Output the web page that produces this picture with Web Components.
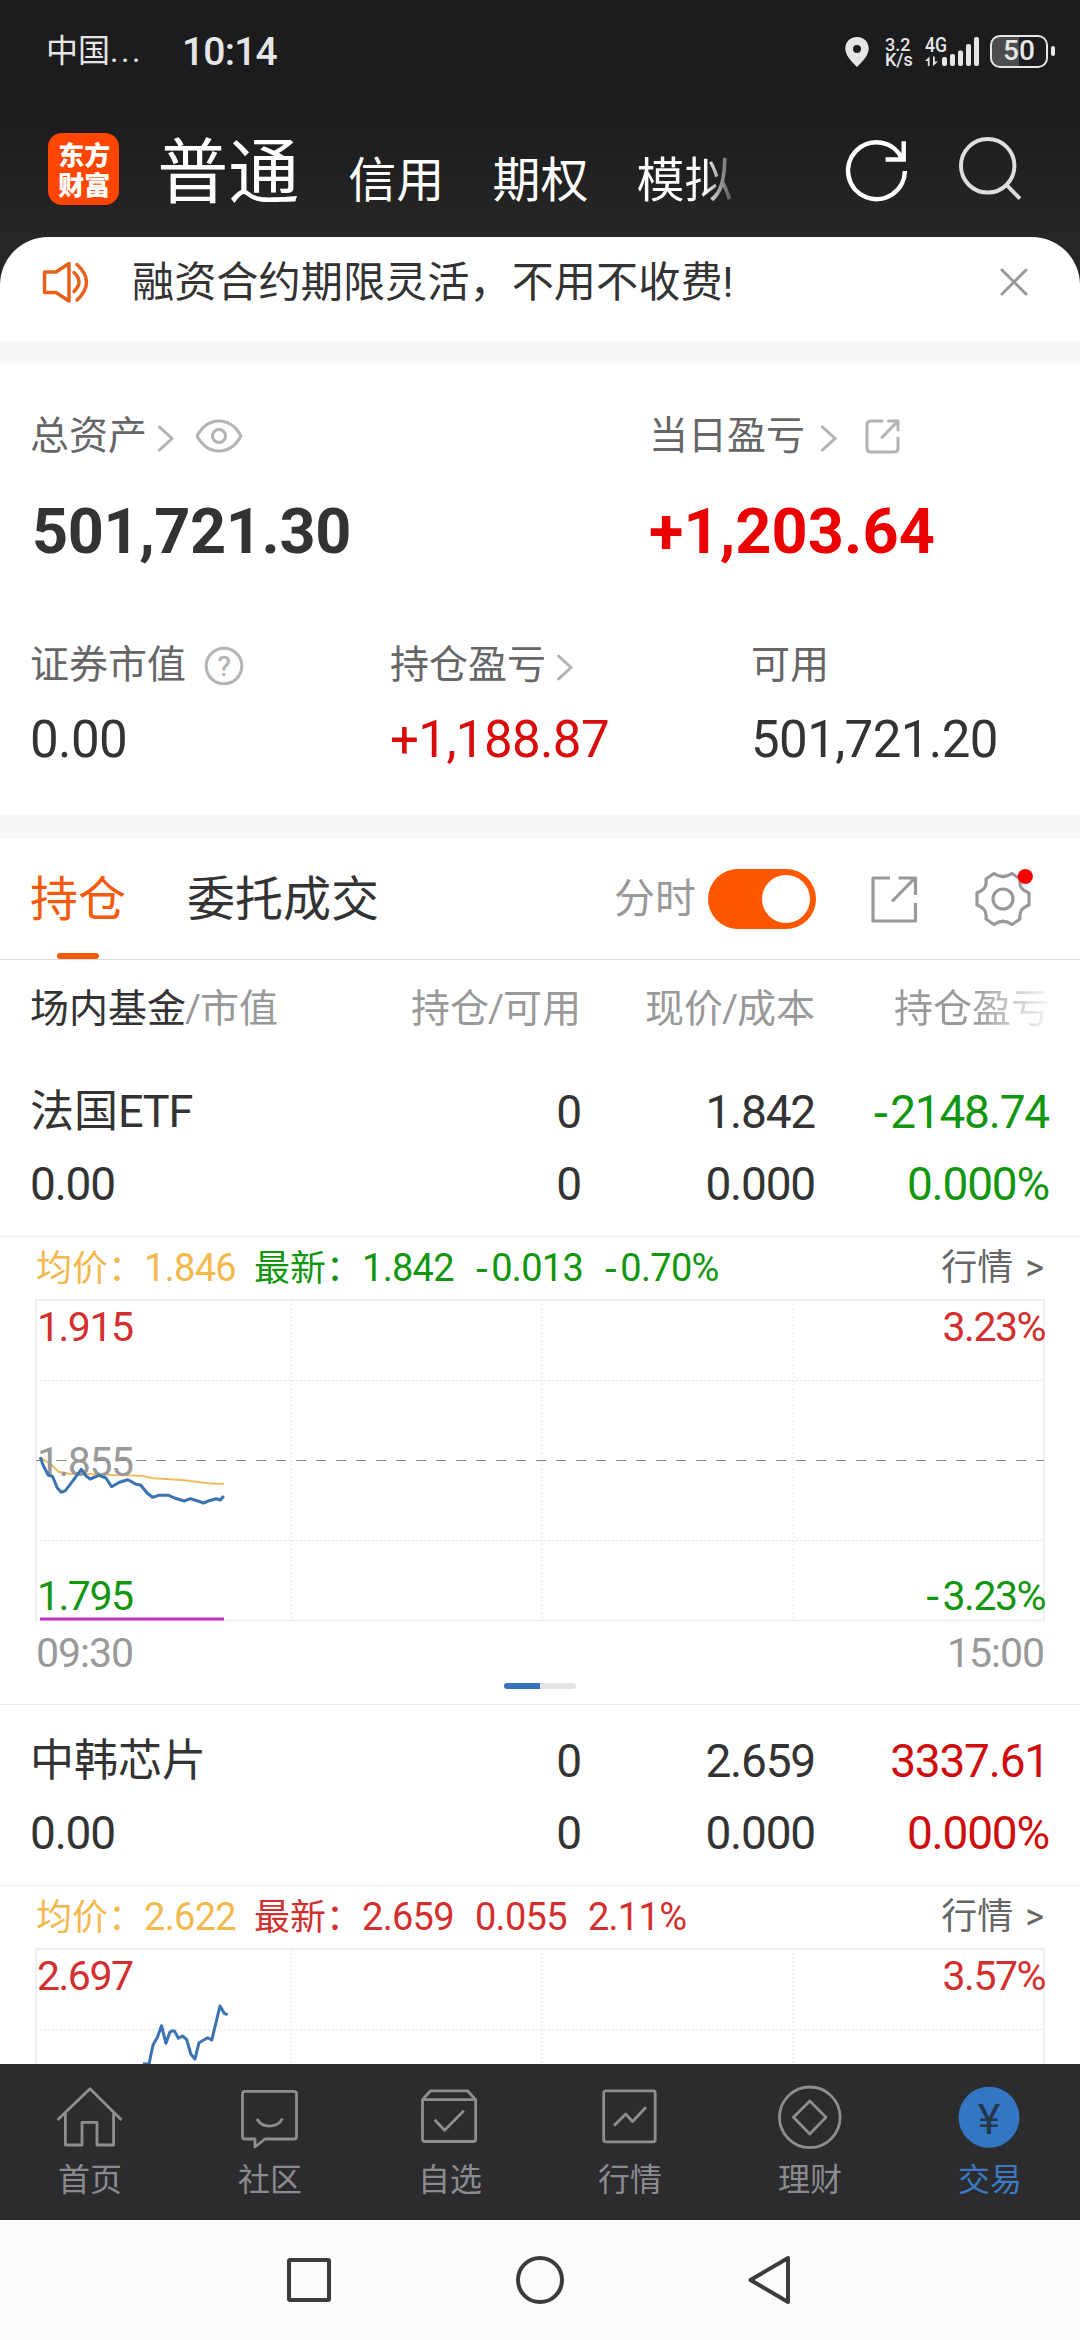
<!DOCTYPE html>
<html lang="zh-CN">
<head>
<meta charset="utf-8">
<title>交易</title>
<style>
    body {
        margin: 0;
        width: 1080px;
        height: 2340px;
        overflow: hidden;
        display: flex;
        flex-direction: column;
        background: #fff;
        color: #333;
        font-family: Roboto, "Noto Sans CJK SC", sans-serif;
    }
    .top {
        background: linear-gradient(#1c1c1e 110px, #262626 237px);
    }
    .list {
        flex: 1;
        min-height: 0;
        overflow: hidden;
    }
</style>
</head>
<body>
    <div class="top">
        <status-bar></status-bar>
        <trade-header></trade-header>
        <notice-bar>融资合约期限灵活，不用不收费!</notice-bar>
    </div>
    <asset-panel></asset-panel>
    <position-tabs></position-tabs>
    <div class="list">
        <position-head></position-head>
        <position-item name="法国ETF" price="1.842" profit="-2148.74" color="#12960f"></position-item>
        <minute-chart avg="1.846" last="1.842" change="-0.013" rate="-0.70%" color="#12960f"
            high="1.915" mid="1.855" low="1.795" percent="3.23%"
            avg-line="4.3,157.3 15.7,165 22.5,171.7 34.6,174 67.3,174.3 76,175 105,175.7 117,178.3 146.5,180 163.7,182.3 177.5,183.7 187.8,183.7"
            line="4.3,157.3 7,165 12.2,175 16.7,176.7 21.2,187.7 25.3,192.3 29.4,190.7 37,180.7 45.3,169.3 50,176 54.2,179 62.8,175.3 70,178 75.6,186.7 83.5,182.3 92,179.7 100,184.3 104.5,185 111.4,193.3 116.5,197.3 122.4,195.3 132.7,195.3 138.6,198 148.2,201 154.4,198.7 162,201 167.5,203 172.3,201 180,198.7 184.4,200 187.8,196"></minute-chart>
        <position-item name="中韩芯片" price="2.659" profit="3337.61" color="#d00d0d"></position-item>
        <minute-chart avg="2.622" last="2.659" change="0.055" rate="2.11%" color="#d32f2f"
            high="2.697" percent="3.57%"
            line="106.9,114.7 113,115 117,96 121.4,88.3 125.5,76.7 130,94.3 133.8,83.3 136.2,81.7 138.6,82.3 142.4,89.3 146.5,87 150.6,90.3 154.8,105 159,110 163,93.7 171.6,88.7 175.8,91 184,57 188.2,64.3 191.6,65.7"></minute-chart>
    </div>
    <tab-bar></tab-bar>
    <system-bar></system-bar>

<script>
class StatusBar extends HTMLElement {
    constructor() {
        super();
        this.attachShadow({ mode: 'open' });
        this.shadowRoot.innerHTML = `
        <style>
            :host {
                display: flex;
                align-items: center;
                box-sizing: border-box;
                height: 103px;
                padding: 0 32px 0 46px;
                color: #e6e6e6;
            }
            .carrier { font-size: 32px; width: 136px; line-height: 103px; white-space: nowrap; }
            .dots { letter-spacing: 2.5px; }
            .time { font-size: 39px; font-weight: 500; letter-spacing: -.8px; flex: 1; }
            .pin { margin-right: 16px; }
            .speed { font-size: 18px; line-height: 15px; font-weight: 500; width: 40px; }
            .net { font-size: 20px; font-weight: 500; }
            .battery {
                position: relative;
                box-sizing: border-box;
                width: 58px;
                height: 33px;
                margin-left: 10px;
                border: 2.5px solid #e6e6e6;
                border-radius: 10px;
                background: linear-gradient(90deg, #4c4c4e 27px, transparent 27px);
                font-size: 28px;
                font-weight: 500;
                line-height: 28px;
                text-align: center;
            }
            .battery::after {
                content: '';
                position: absolute;
                right: -9px;
                top: 9px;
                width: 4px;
                height: 10px;
                border-radius: 2px;
                background: #e6e6e6;
            }
            svg { display: block; overflow: visible; }
        </style>
        <div class="carrier">中国<span class="dots">...</span></div>
        <div class="time">10:14</div>
        <svg class="pin" width="24" height="30" viewBox="0 0 24 30"><path fill="#e6e6e6" fill-rule="evenodd" d="M12 0C5 0 .3 5 .3 11.5.3 18 6 24 12 30c6-6 11.700-12 11.700-18.500C23.700 5 19 0 12 0zM12 8a4 4 0 1 1 0 8 4 4 0 0 1 0-8z"/></svg>
        <div class="speed">3.2<br>K/s</div>
        <svg class="net" width="55" height="32" viewBox="0 0 55 32" fill="#e6e6e6">
            <text x="0" y="16" textLength="22" lengthAdjust="spacingAndGlyphs">4G</text>
            <path d="M0 25l4.500-4.500V30H2.800v-5zM8 20.500V30l5-4.500H9.800v-5z"/>
            <rect x="17" y="21" width="5" height="9" rx="2"/>
            <rect x="25" y="18" width="5" height="12" rx="2"/>
            <rect x="33" y="14.500" width="5" height="15.500" rx="2"/>
            <rect x="41" y="8" width="5" height="22" rx="2"/>
            <rect x="49" y="1" width="5" height="29" rx="2"/>
        </svg>
        <div class="battery">50</div>
        `;
    }
}
customElements.define('status-bar', StatusBar);


class TradeHeader extends HTMLElement {
    constructor() {
        super();
        this.attachShadow({ mode: 'open' });
        this.shadowRoot.innerHTML = `
        <style>
            :host {
                display: flex;
                box-sizing: border-box;
                height: 134px;
                padding: 30px 54px 0 48px;
                color: #fff;
            }
            .logo {
                box-sizing: border-box;
                width: 72px;
                height: 72px;
                padding: 6px 0 0 1px;
                border-radius: 14px;
                background: #ff4500;
                font: 900 26px/30px "Noto Sans CJK SC", sans-serif;
                text-align: center;
            }
            nav {
                display: flex;
                align-items: baseline;
                gap: 48px;
                width: 620px;
                height: 90px;
                margin-left: 38px;
                font-size: 48px;
                line-height: 80px;
                white-space: nowrap;
            }
            .on { font-size: 71px; margin-right: 1px; }
            .fade {
                background: linear-gradient(90deg, #fff 68px, #555 96px);
                -webkit-background-clip: text;
                background-clip: text;
                color: transparent;
            }
            .more { width: 36px; height: 6px; }
            svg { display: block; fill: none; }
            .refresh { margin: 1px 42px 0 64px; }
        </style>
        <div class="logo">东方<br>财富</div>
        <nav>
            <span class="on">普通</span>
            <span>信用</span>
            <span>期权</span>
            <span class="fade">模拟</span>
            <svg class="more" viewBox="0 0 36 6"><path fill="#3a3a3c" d="M0 6l4-5h4L4 6zM15 0h6v3h-4zM20 6l4-5h4l-4 5zM31 1h5v4h-4z"/></svg>
        </nav>
        <svg class="refresh" width="72" height="72" viewBox="0 0 72 72" stroke="#fff" stroke-width="4.500">
            <path d="M64.500 37A28.700 28.700 0 1 1 62 25"/>
            <path d="M63.300 7V25.300H45"/>
        </svg>
        <svg width="72" height="72" viewBox="0 0 72 72" stroke="#dedede" stroke-width="4">
            <circle cx="33" cy="32.800" r="27"/>
            <path d="M51.500 51.500L65.500 66"/>
        </svg>
        `;
    }
}
customElements.define('trade-header', TradeHeader);


class NoticeBar extends HTMLElement {
    constructor() {
        super();
        this.attachShadow({ mode: 'open' });
        this.shadowRoot.innerHTML = `
        <style>
            :host {
                display: flex;
                align-items: center;
                box-sizing: border-box;
                height: 104px;
                padding: 0 52px 14px 42px;
                border-radius: 48px 48px 0 0;
                background: #fff;
                font-size: 42.200px;
                line-height: 60px;
            }
            .text { flex: 1; margin-left: 42px; padding-top: 2px; }
            svg { fill: none; stroke-linecap: round; stroke-linejoin: round; }
        </style>
        <svg width="48" height="48" viewBox="0 0 48 48" stroke="#e8611c" stroke-width="3.500">
            <path d="M2.500 14H14L27 5.500V43L14 34.500H2.500z"/>
            <path d="M32 14.500Q42 24 32 33.500M35 6.500Q54 24 35 42"/>
        </svg>
        <div class="text"><slot></slot></div>
        <svg width="28" height="28" viewBox="0 0 28 28" stroke="#999" stroke-width="3"><path d="M2 2L26 26M26 2L2 26"/></svg>
        `;
    }
}
customElements.define('notice-bar', NoticeBar);


class AssetItem extends HTMLElement {
    constructor() {
        super();
        this.attachShadow({ mode: 'open' });
        this.shadowRoot.innerHTML = `
        <style>
            :host { display: block; white-space: nowrap; }
            .label {
                display: flex;
                align-items: center;
                height: 60px;
                font-size: 39px;
                line-height: 60px;
                color: #666;
            }
            .arrow { margin: 3px 0 0 var(--arrow-gap, 10px); }
            .value {
                margin-top: 12px;
                font-size: 51px;
                line-height: 66px;
                letter-spacing: -.6px;
            }
            :host([big]) .value {
                margin-top: 33px;
                font-size: 63px;
                font-weight: 700;
                letter-spacing: .1px;
            }
            :host([big]:not([up])) .value { padding-left: 2px; letter-spacing: -.4px; }
            :host([up]) .value { color: #d90b0b; }
            :host([big][up]) .value { color: #eb0000; }
        </style>
        <div class="label">
            <span id="label"></span>
            <svg class="arrow" width="18" height="28" viewBox="0 0 18 28" fill="none" stroke="#b3b3b3" stroke-width="3" stroke-linecap="round"><path d="M2.500 3L15 14.500 2.500 26"/></svg>
            <slot name="icon"></slot>
        </div>
        <div class="value"><slot></slot></div>
        `;
    }
    connectedCallback() {
        this.shadowRoot.querySelector('#label').innerText = this.getAttribute('label');
        if (!this.hasAttribute('arrow')) {
            this.shadowRoot.querySelector('.arrow').style.display = 'none';
        }
    }
}
customElements.define('asset-item', AssetItem);


class AssetPanel extends HTMLElement {
    constructor() {
        super();
        this.attachShadow({ mode: 'open' });
        this.shadowRoot.innerHTML = `
        <style>
            :host {
                display: block;
                box-sizing: border-box;
                height: 498px;
                padding: 41px 30px 0;
                border-top: 24px solid #f7f8fa;
                border-bottom: 24px solid #f7f8fa;
                background: #fff;
            }
            .row { display: grid; }
            .first { grid-template-columns: 619px 1fr; }
            .second { grid-template-columns: 360px 361px 1fr; margin-top: 70px; }
            .wide { --arrow-gap: 15px; }
            svg { display: block; fill: none; stroke: #b3b3b3; stroke-width: 3; stroke-linejoin: round; stroke-linecap: round; }
            .eye { margin-left: 20px; }
            .share { margin: 2px 0 0 27px; }
            .help { margin: 2px 0 0 17px; }
            .help text { fill: #b3b3b3; stroke: #b3b3b3; stroke-width: .5; font-size: 28px; text-anchor: middle; }
        </style>
        <div class="row first">
            <asset-item big arrow label="总资产">501,721.30
                <svg slot="icon" class="eye" width="48" height="34" viewBox="0 0 48 34"><path d="M2 17C13 -3 35 -3 46 17 35 37 13 37 2 17z"/><circle cx="24" cy="17" r="6.500"/></svg>
            </asset-item>
            <asset-item big up arrow class="wide" label="当日盈亏">+1,203.64
                <svg slot="icon" class="share" width="36" height="36" viewBox="0 0 36 36"><path d="M17 2H6Q2 2 2 6V29Q2 33 6 33H29Q33 33 33 29V19M23.500 2H33V11M32 3L17 18.500"/></svg>
            </asset-item>
        </div>
        <div class="row second">
            <asset-item label="证券市值">0.00
                <svg slot="icon" class="help" width="42" height="42" viewBox="0 0 42 42"><circle cx="21" cy="21" r="17.800"/><text x="21" y="31">?</text></svg>
            </asset-item>
            <asset-item up arrow style="--arrow-gap: 10px" label="持仓盈亏">+1,188.87</asset-item>
            <asset-item label="可用">501,721.20</asset-item>
        </div>
        `;
    }
}
customElements.define('asset-panel', AssetPanel);


class PositionTabs extends HTMLElement {
    constructor() {
        super();
        this.attachShadow({ mode: 'open' });
        this.shadowRoot.innerHTML = `
        <style>
            :host {
                display: flex;
                align-items: center;
                box-sizing: border-box;
                height: 121px;
                padding: 0 48px 0 30px;
                border-bottom: 1px solid #dcdcdc;
                font-size: 48px;
                line-height: 122px;
            }
            .tab { height: 120px; margin-right: 61px; }
            .on { position: relative; color: #f55a0c; }
            .on::after {
                content: '';
                position: absolute;
                left: 27px;
                bottom: 0;
                width: 42px;
                height: 6px;
                border-radius: 3px;
                background: #f55a0c;
            }
            .label { margin-left: auto; font-size: 41px; color: #999; }
            .switch {
                box-sizing: border-box;
                width: 108px;
                height: 60px;
                margin-left: 12px;
                padding: 6px;
                border-radius: 30px;
                background: #ff5700;
            }
            .switch::after {
                content: '';
                display: block;
                width: 48px;
                height: 48px;
                margin-left: auto;
                border-radius: 50%;
                background: #fff;
            }
            svg { display: block; fill: none; stroke: #999; stroke-width: 3.200; stroke-linejoin: round; overflow: visible; }
            .share { margin: 0 56px 0 54px; }
        </style>
        <span class="tab on">持仓</span>
        <span class="tab">委托成交</span>
        <span class="label">分时</span>
        <div class="switch"></div>
        <svg class="share" width="48" height="48" viewBox="0 0 48 48"><path d="M20 3H3V46H45.500V28M28.500 3H45.500V20M44 4L22 26.500"/></svg>
        <svg width="58" height="58" viewBox="-29 -29 58 58">
            <path d="M26 -6C19 -9 16 -12 17 -20L9 -25.500Q0 -19 -9 -25.500L-17 -20C-16 -12 -19 -9 -26 -6V6C-19 9 -16 12 -17 20L-9 25.500Q0 19 9 25.500L17 20C16 12 19 9 26 6z"/>
            <circle r="10"/>
            <circle cx="22.300" cy="-22.500" r="7.600" fill="#fb0000" stroke="none"/>
        </svg>
        `;
    }
}
customElements.define('position-tabs', PositionTabs);


class PositionHead extends HTMLElement {
    constructor() {
        super();
        this.attachShadow({ mode: 'open' });
        this.shadowRoot.innerHTML = `
        <style>
            :host {
                display: grid;
                grid-template-columns: 317px 234px 234px 235px;
                height: 96px;
                padding: 0 30px;
                font-size: 39px;
                line-height: 98px;
                color: #999;
                text-align: right;
                white-space: nowrap;
            }
            .first { text-align: left; }
            b { font-weight: 400; color: #333; }
            i { font-style: normal; margin: 0 -1px; }
            .fade {
                background: linear-gradient(90deg, #999 156px, #f4f4f4 232px);
                -webkit-background-clip: text;
                background-clip: text;
                color: transparent;
            }
        </style>
        <span class="first"><b>场内基金</b><i>/</i>市值</span>
        <span>持仓<i>/</i>可用</span>
        <span>现价<i>/</i>成本</span>
        <span class="fade">持仓盈亏</span>
        `;
    }
}
customElements.define('position-head', PositionHead);


class PositionItem extends HTMLElement {
    constructor() {
        super();
        this.attachShadow({ mode: 'open' });
    }
    connectedCallback() {
        const name = this.getAttribute('name').replace(/[A-Z]+/, '<small>$&</small>');
        const profit = this.getAttribute('profit').replace('-', '<i>-</i>');
        this.shadowRoot.innerHTML = `
        <style>
            :host {
                display: grid;
                grid-template-columns: 317px 234px 234px 234px;
                grid-auto-rows: 72px;
                box-sizing: border-box;
                height: 181px;
                padding: 19px 30px 0;
                border-bottom: 1px solid #ebebeb;
                font-size: 46px;
                line-height: 74px;
                letter-spacing: -1.200px;
                text-align: right;
            }
            .left { text-align: left; }
            .name { font-size: 44px; letter-spacing: 0; }
            small { font-size: 45px; letter-spacing: -1.200px; }
            i { font-family: "DejaVu Sans", sans-serif; font-style: normal; letter-spacing: 1px; }
            .profit { color: ${this.getAttribute('color')}; }
        </style>
        <span class="left name">${name}</span>
        <span>0</span>
        <span>${this.getAttribute('price')}</span>
        <span class="profit">${profit}</span>
        <span class="left">0.00</span>
        <span>0</span>
        <span>0.000</span>
        <span class="profit">0.000%</span>
        `;
    }
}
customElements.define('position-item', PositionItem);


class MinuteChart extends HTMLElement {
    constructor() {
        super();
        this.attachShadow({ mode: 'open' });
    }
    connectedCallback() {
        const get = (key) => this.getAttribute(key) || '';
        const signed = (key) => get(key).replace('-', '<i>-</i>');
        const percent = get('percent');
        this.shadowRoot.innerHTML = `
        <style>
            :host {
                display: block;
                box-sizing: border-box;
                height: 468px;
                padding: 0 36px;
                border-bottom: 1px solid #ebebeb;
            }
            .quote {
                display: flex;
                height: 63px;
                font-size: 36px;
                line-height: 63px;
                white-space: pre;
                color: ${get('color')};
            }
            .num { font-size: 38px; letter-spacing: -.7px; }
            i, .minus { font-family: "DejaVu Sans", sans-serif; font-style: normal; letter-spacing: 2.500px; }
            .avg { color: #f3b94d; margin-right: 18px; }
            .change { margin: 0 21px; }
            .more { margin-left: auto; color: #666; word-spacing: 3px; }
            svg { display: block; overflow: visible; }
            text { font-size: 41px; letter-spacing: -1.500px; }
            .time {
                display: flex;
                justify-content: space-between;
                height: 60px;
                margin-top: 2px;
                font-size: 41px;
                line-height: 60px;
                letter-spacing: -1px;
                color: #999;
            }
            .page {
                width: 72px;
                height: 6px;
                margin: 0 auto;
                border-radius: 3px;
                background: linear-gradient(90deg, #3672bd 36px, #e3e3e3 36px);
            }
        </style>
        <div class="quote">
            <span class="avg">均价：<span class="num">${get('avg')}</span></span>
            <span>最新：<span class="num">${get('last')}</span></span>
            <span class="num change">${signed('change')}</span>
            <span class="num">${signed('rate')}</span>
            <span class="more">行情 &gt;</span>
        </div>
        <svg width="1008" height="321" viewBox="0 0 1008 321" fill="none">
            <rect x="0" y="0" width="1008" height="320.500" stroke="#efefef" stroke-width="2"/>
            <path d="M255.500 0V320M506 0V320M757.500 0V320M0 80.500H1008M0 240.500H1008" stroke="#e6e6e6" stroke-dasharray="2 2"/>
            <path d="M0 160.500H1008" stroke="#888" stroke-dasharray="10 10"/>
            <polyline points="${get('avg-line')}" stroke="#f0bd5e" stroke-width="2"/>
            <text x="1" y="41" fill="#d32f2f">${get('high')}</text>
            <text x="1" y="175.500" fill="#999">${get('mid')}</text>
            <text x="1" y="310" fill="#12960f">${get('low')}</text>
            <text x="1009" y="41" fill="#d32f2f" text-anchor="end">${percent}</text>
            <text x="1009" y="310" fill="#12960f" text-anchor="end"><tspan class="minus">-</tspan>${percent}</text>
            <polyline points="${get('line')}" stroke="#3b72b0" stroke-width="3" stroke-linejoin="round"/>
            <path d="M4 319H188" stroke="#bb33bf" stroke-width="3"/>
        </svg>
        <div class="time"><span>09:30</span><span>15:00</span></div>
        <div class="page"></div>
        `;
    }
}
customElements.define('minute-chart', MinuteChart);


class TabItem extends HTMLElement {
    constructor() {
        super();
        this.attachShadow({ mode: 'open' });
        this.shadowRoot.innerHTML = `
        <style>
            :host {
                display: flex;
                flex-direction: column;
                align-items: center;
                flex: 1;
                padding-top: 18px;
                color: #8b8b8f;
                font-size: 32px;
                line-height: 42px;
            }
            :host([active]) { color: #3d79c2; }
            .label { margin-top: 5px; }
        </style>
        <slot name="icon"></slot>
        <span class="label"><slot></slot></span>
        `;
    }
}
customElements.define('tab-item', TabItem);


class TabBar extends HTMLElement {
    constructor() {
        super();
        this.attachShadow({ mode: 'open' });
        this.shadowRoot.innerHTML = `
        <style>
            :host {
                display: flex;
                flex: none;
                height: 156px;
                background: #2c2c2e;
            }
            svg {
                display: block;
                width: 72px;
                height: 72px;
                fill: none;
                stroke: #8e8e90;
                stroke-width: 2.800;
                stroke-linejoin: round;
            }
            .yen { font-size: 43px; fill: #26364a; stroke: none; text-anchor: middle; }
        </style>
        <tab-item><svg slot="icon" viewBox="0 0 72 72"><path d="M3.500 38L36 6.700 67.500 38M11.400 31V63H28V40.300H43V63H59.600V31"/></svg>首页</tab-item>
        <tab-item><svg slot="icon" viewBox="0 0 72 72"><path d="M11 9.300H60Q62.500 9.300 62.500 12V54.500Q62.500 57 60 57H31L21 65V57H11Q8.500 57 8.500 54.500V12Q8.500 9.300 11 9.300zM23 37C28 46.500 43.500 46.500 48.400 36.500"/></svg>社区</tab-item>
        <tab-item><svg slot="icon" viewBox="0 0 72 72"><path d="M8.500 17.700L16.500 8.800H53.500L61.700 17.700V57Q61.700 59.500 59.200 59.500H11Q8.500 59.500 8.500 57V17.700H61.700M20.600 37.700L30.600 48.300 49.800 28.700"/></svg>自选</tab-item>
        <tab-item><svg slot="icon" viewBox="0 0 72 72"><rect x="9.700" y="8.800" width="51.500" height="51" rx="2"/><path d="M20 43.700L31.700 32 38.500 39.500 52 25.300"/></svg>行情</tab-item>
        <tab-item><svg slot="icon" viewBox="0 0 72 72"><circle cx="35.800" cy="35.300" r="30.300"/><path d="M35.800 19L52 35.300 35.800 52 19.500 35.300z"/></svg>理财</tab-item>
        <tab-item active><svg slot="icon" viewBox="0 0 72 72"><circle cx="35" cy="35.300" r="30.500" fill="#3276c4" stroke="none"/><text class="yen" x="35" y="51.500">¥</text></svg>交易</tab-item>
        `;
    }
}
customElements.define('tab-bar', TabBar);


class SystemBar extends HTMLElement {
    constructor() {
        super();
        this.attachShadow({ mode: 'open' });
        this.shadowRoot.innerHTML = `
        <style>
            :host {
                display: flex;
                flex: none;
                align-items: center;
                justify-content: center;
                gap: 181px;
                height: 120px;
                background: #fcfcfc;
            }
            svg { fill: none; stroke: #3c3c3c; stroke-width: 4; stroke-linejoin: round; }
        </style>
        <svg width="50" height="50" viewBox="0 0 50 50"><rect x="5" y="5" width="40" height="40" rx="1"/></svg>
        <svg width="50" height="50" viewBox="0 0 50 50"><circle cx="25" cy="25" r="22"/></svg>
        <svg width="50" height="50" viewBox="0 0 50 50"><path d="M4.500 25L42 3V47z"/></svg>
        `;
    }
}
customElements.define('system-bar', SystemBar);
</script>
</body>
</html>
